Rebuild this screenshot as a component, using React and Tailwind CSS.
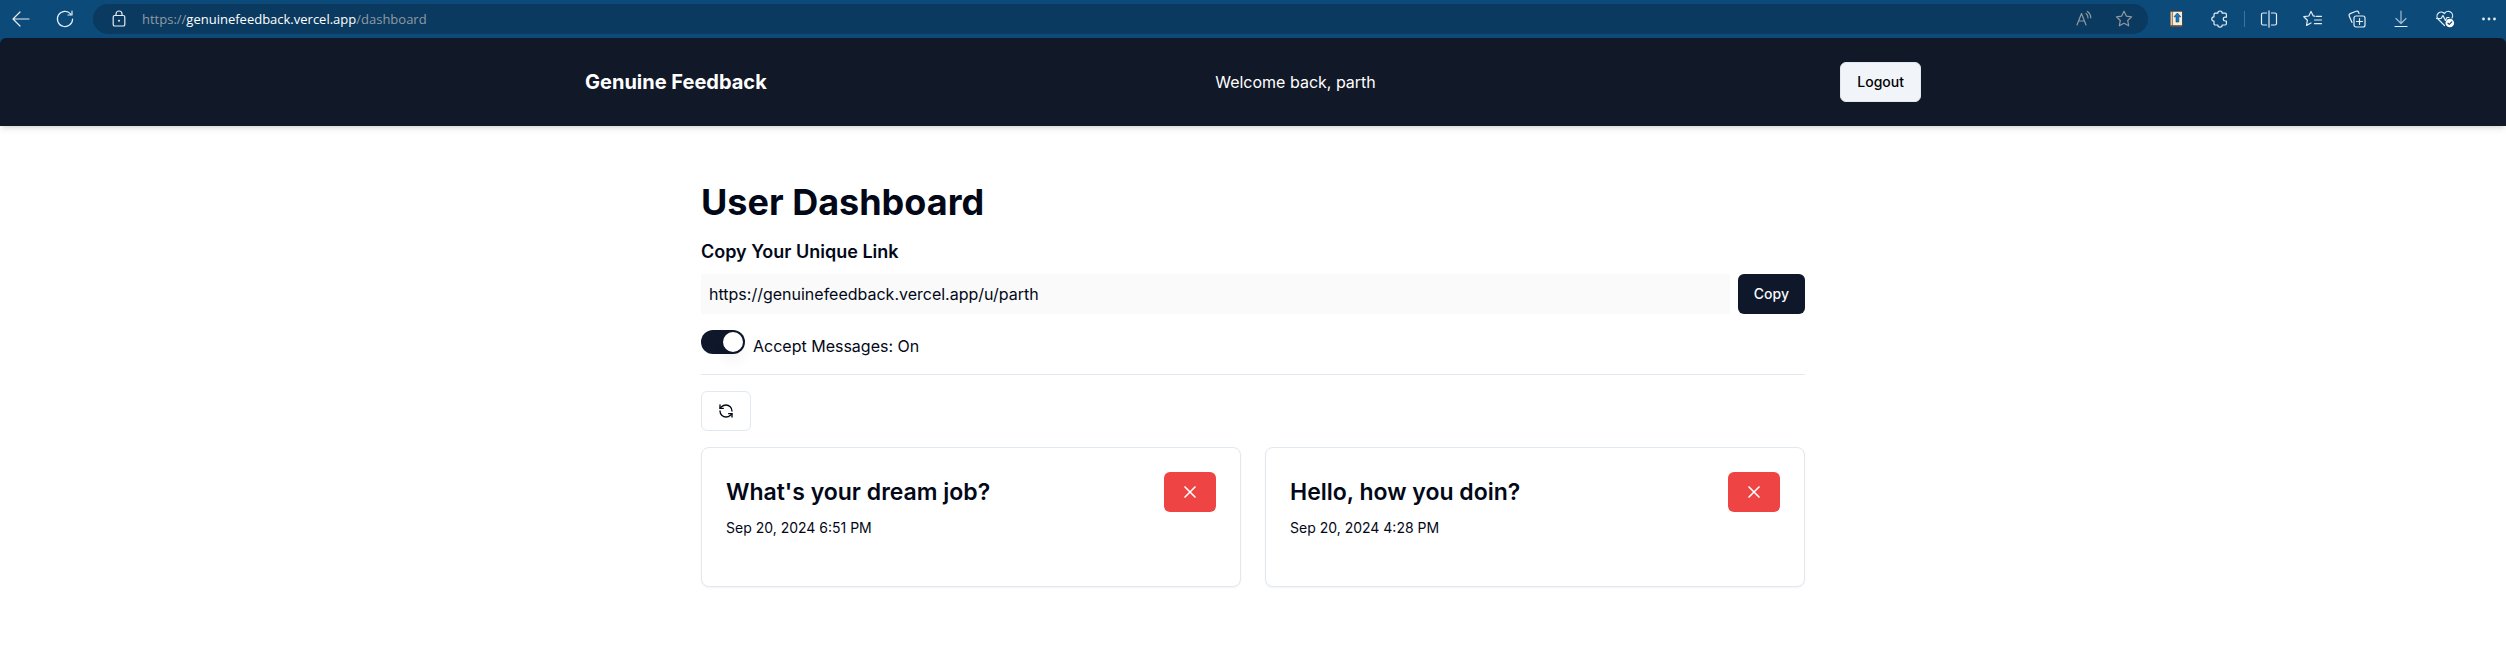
import { useState } from "react";
import { RefreshCcw, X } from "lucide-react";

const stroke = {
  fill: "none",
  stroke: "currentColor",
  strokeWidth: 1.2,
  strokeLinecap: "round",
  strokeLinejoin: "round",
};

function Icon({ children }) {
  return (
    <svg viewBox="0 0 20 20" className="size-5" aria-hidden="true" {...stroke}>
      {children}
    </svg>
  );
}

const STAR = "M10 2.2l2.3 4.9 5.3.7-3.9 3.7 1 5.3L10 14.2l-4.7 2.6 1-5.3-3.9-3.7 5.3-.7z";

function ToolButton({ label, className = "", children }) {
  return (
    <button type="button" aria-label={label} className={`flex size-5 shrink-0 items-center justify-center ${className}`}>
      <Icon>{children}</Icon>
    </button>
  );
}

function BrowserBar() {
  return (
    <div className="bg-[#0c4a7a]">
      <div className="flex h-[38px] items-center pl-[11px] pr-[7px] text-[#e3edf5]">
        <ToolButton label="Back">
          <path d="M18 10H2M9 3L2 10l7 7" />
        </ToolButton>
        <ToolButton label="Refresh" className="ml-6">
          <path d="M17.6 10A7.6 7.6 0 1 1 15.6 4.8M17 2v4h-4" />
        </ToolButton>
        <div className="ml-[18px] flex h-[30px] flex-1 items-center rounded-full bg-[#0a3a5f] pl-4 pr-[14px]">
          <ToolButton label="Site information">
            <rect x="4.2" y="6.5" width="11.6" height="10.5" rx="1.6" />
            <path d="M7 6.5V5a3 3 0 0 1 6 0v1.5" />
            <circle cx="10" cy="11.8" r="1" fill="currentColor" stroke="none" />
          </ToolButton>
          <div className="ml-[13px] flex-1 font-['Open_Sans','Noto_Sans',sans-serif] text-[13px] leading-5 text-[#8f9ba5]">
            https://<span className="text-white">genuinefeedback.vercel.app</span>/dashboard
          </div>
          <ToolButton label="Read aloud" className="text-[#9098a0]">
            <path d="M3 16L7.5 4.5 12 16M4.6 12h5.8M12 4.6a5 5 0 0 1 2 4.4M13.4 2.4a8 8 0 0 1 3.4 6.4" />
          </ToolButton>
          <ToolButton label="Add to favorites" className="ml-5 text-[#9098a0]">
            <path d={STAR} />
          </ToolButton>
        </div>
        <button type="button" aria-label="Book extension" className="ml-[18px] flex size-5 items-center justify-center">
          <svg viewBox="0 0 20 20" className="size-5" aria-hidden="true">
            <rect x="4" y="2" width="12.5" height="16" rx="1" fill="#6a4b3a" />
            <rect x="6.8" y="2.8" width="9.2" height="13.4" fill="#f6eedb" />
            <rect x="4.6" y="2.8" width="1.7" height="13.4" fill="#d8c9ae" />
            <path d="M11.4 4l3.4 3.8h-2V13h-2.8V7.8H8z" fill="#1878c0" stroke="#12405f" strokeWidth=".6" />
          </svg>
        </button>
        <ToolButton label="Extensions" className="ml-6">
          <path d="M5.2 4.2h2.6a2.2 2.2 0 0 1 4.4 0h3a1.2 1.2 0 0 1 1.2 1.2v2.8h-1.2a1.9 1.9 0 0 0 0 3.8h1.2v2.8a1.2 1.2 0 0 1-1.2 1.2h-3a2.2 2.2 0 0 1-4.4 0H5.2A1.2 1.2 0 0 1 4 14.800v-2.600a2.200 2.200 0 0 1 0-4.400V5.400a1.200 1.200 0 0 1 1.200-1.200z" />
        </ToolButton>
        <span className="ml-[14px] h-4 w-px bg-[#3f739b]" />
        <ToolButton label="Split screen" className="ml-[14px]">
          <path d="M10 1.800v16.400M7.600 4H4a1.500 1.500 0 0 0-1.500 1.500v9A1.500 1.500 0 0 0 4 16h3.600M12.400 4H16a1.500 1.500 0 0 1 1.500 1.500v9A1.500 1.500 0 0 1 16 16h-3.600" />
        </ToolButton>
        <ToolButton label="Favorites" className="ml-6">
          <path d="M11.500 7.200l-1.200-.2L8 2.400 5.800 7l-5 .7 3.600 3.500-.9 5.200L8 14M13 7.300H18.500M11.500 11H18.500M11.500 14.700H18.500" />
        </ToolButton>
        <ToolButton label="Collections" className="ml-6">
          <rect x="7" y="7" width="11" height="11" rx="2" />
          <path d="M12.500 9.500v6M9.500 12.500h6M5 13.500L2.300 7.200a2 2 0 0 1 .9-2.600L9 2.300a2 2 0 0 1 2.600.9L12 4.500" />
        </ToolButton>
        <ToolButton label="Downloads" className="ml-6">
          <path d="M10 2v12M5 9.500l5 5 5-5" opacity=".7" />
          <path d="M4 17.500h12" />
        </ToolButton>
        <ToolButton label="Browser essentials" className="ml-6">
          <path d="M9.500 16.500L3 10a4.200 4.200 0 0 1 6.500-5.500A4.200 4.200 0 0 1 17 9M1.500 9.500H6l2-3 2.400 5L12 8.500h2" />
          <circle cx="14.800" cy="14" r="4.300" fill="#ffffff" stroke="none" />
          <path d="M13 14.200l1.300 1.200 2.400-2.600" stroke="#0c4a7a" />
        </ToolButton>
        <ToolButton label="Settings and more" className="ml-6">
          <g fill="currentColor" stroke="none">
            <circle cx="4.500" cy="10" r="1.400" />
            <circle cx="10" cy="10" r="1.400" />
            <circle cx="15.500" cy="10" r="1.400" />
          </g>
        </ToolButton>
      </div>
    </div>
  );
}

function Navbar() {
  return (
    <nav className="rounded-t-md bg-[#111827] py-6 text-white shadow-md">
      <div className="mx-auto flex max-w-[1400px] items-center justify-between px-8">
        <a href="#" className="text-xl font-bold">Genuine Feedback</a>
        <span className="mr-4">Welcome back, parth</span>
        <button type="button" className="h-10 rounded-md border border-slate-200 bg-slate-100 px-4 text-sm font-medium text-black">
          Logout
        </button>
      </div>
    </nav>
  );
}

function MessageCard({ title, date }) {
  return (
    <article className="flex min-h-[140px] items-start justify-between rounded-lg border border-slate-200 bg-white p-6 shadow-xs">
      <div>
        <h3 className="text-[23px] leading-10 font-semibold">{title}</h3>
        <p className="mt-1.5 text-sm">{date}</p>
      </div>
      <button
        type="button"
        aria-label="Delete message"
        className="flex h-10 items-center justify-center rounded-md bg-[#ef4444] px-4 text-slate-50"
      >
        <X className="size-5" />
      </button>
    </article>
  );
}

const MESSAGES = [
  { title: "What's your dream job?", date: "Sep 20, 2024 6:51 PM" },
  { title: "Hello, how you doin?", date: "Sep 20, 2024 4:28 PM" },
];

export default function App() {
  const [accepting, setAccepting] = useState(true);
  return (
    <div className="min-h-screen bg-white font-['Inter',sans-serif] text-[#020817]">
      <BrowserBar />
      <div className="bg-linear-to-b from-[#0c4a7a] from-50% to-white to-50%">
        <Navbar />
      </div>
      <main className="mx-auto my-8 max-w-6xl p-6">
        <h1 className="mb-4 text-4xl font-bold">User Dashboard</h1>
        <label htmlFor="profile-link" className="mb-2 block text-lg font-semibold">
          Copy Your Unique Link
        </label>
        <div className="mb-4 flex items-center">
          <input
            id="profile-link"
            type="text"
            readOnly
            value="https://genuinefeedback.vercel.app/u/parth"
            className="mr-2 h-10 min-w-0 flex-1 bg-neutral-50 p-2"
          />
          <button type="button" className="h-10 rounded-md bg-slate-900 px-4 text-sm font-medium text-slate-50">
            Copy
          </button>
        </div>
        <div className="mb-4 flex h-7 items-start">
          <input
            id="accept-messages"
            type="checkbox"
            role="switch"
            checked={accepting}
            onChange={(event) => setAccepting(event.target.checked)}
            className="flex h-6 w-11 appearance-none items-center rounded-full bg-slate-200 p-0.5 before:size-5 before:rounded-full before:bg-white before:shadow-lg checked:justify-end checked:bg-slate-900"
          />
          <label htmlFor="accept-messages" className="ml-2 self-end">
            Accept Messages: {accepting ? "On" : "Off"}
          </label>
        </div>
        <hr className="border-slate-200" />
        <button
          type="button"
          aria-label="Refresh messages"
          className="mt-4 flex h-10 items-center rounded-md border border-slate-200 bg-white px-4"
        >
          <RefreshCcw className="size-4" />
        </button>
        <div className="mt-4 grid grid-cols-1 gap-6 md:grid-cols-2">
          {MESSAGES.map((message) => (
            <MessageCard key={message.date} {...message} />
          ))}
        </div>
      </main>
    </div>
  );
}
